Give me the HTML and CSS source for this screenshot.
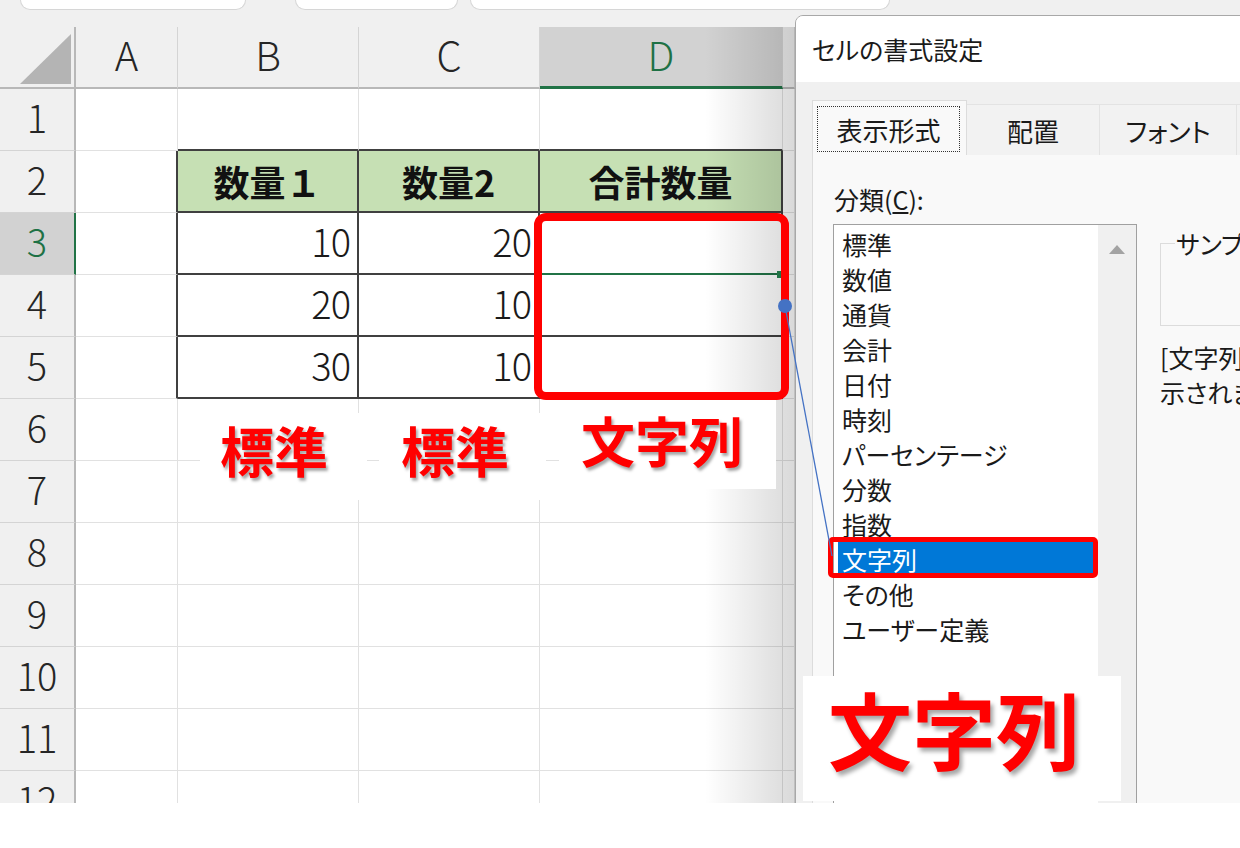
FILE: index.html
```html
<!DOCTYPE html>
<html lang="ja">
<head>
  <meta charset="UTF-8" />
  <meta name="viewport" content="width=device-width, initial-scale=1.0"/>
  <title>セルの書式設定 - 文字列</title>
  <link rel="stylesheet" href="styles.css">
</head>
<body>
  <div class="screen">

    <!-- 名前ボックス・数式バーの下端 -->
    <div class="toolbar">
      <div class="box box-name"></div>
      <div class="box box-fx"></div>
      <div class="box box-formula"></div>
    </div>

    <!-- シート -->
    <div class="sheet">
      <div class="corner"><span class="tri"></span></div>
      <div class="ch">A</div><div class="ch">B</div><div class="ch">C</div><div class="ch sel">D</div><div class="ch"></div>

      <div class="rh">1</div><div></div><div class="top"></div><div class="top"></div><div class="top"></div><div></div>
      <div class="rh">2</div><div class="edge"></div><div class="t th">数量１</div><div class="t th">数量2</div><div class="t th">合計数量</div><div></div>
      <div class="rh sel">3</div><div class="edge"></div><div class="t num">10</div><div class="t num">20</div><div class="t cur"></div><div></div>
      <div class="rh">4</div><div class="edge"></div><div class="t num">20</div><div class="t num">10</div><div class="t"></div><div></div>
      <div class="rh">5</div><div class="edge"></div><div class="t num">30</div><div class="t num">10</div><div class="t"></div><div></div>
      <div class="rh">6</div><div></div><div></div><div></div><div></div><div></div>
      <div class="rh">7</div><div></div><div></div><div></div><div></div><div></div>
      <div class="rh">8</div><div></div><div></div><div></div><div></div><div></div>
      <div class="rh">9</div><div></div><div></div><div></div><div></div><div></div>
      <div class="rh">10</div><div></div><div></div><div></div><div></div><div></div>
      <div class="rh">11</div><div></div><div></div><div></div><div></div><div></div>
      <div class="rh">12</div><div></div><div></div><div></div><div></div><div></div>
    </div>

    <!-- ダイアログの影 -->
    <div class="shade"></div>
    <div class="fill-handle"></div>

    <!-- セルの書式設定 -->
    <div class="dialog">
      <div class="dlg-title">セルの書式設定</div>
      <div class="dlg-body">
        <div class="tabs">
          <div class="tab active"><span class="focus">表示形式</span></div>
          <div class="tab w2">配置</div>
          <div class="tab w3">フォント</div>
          <div class="tab w4">罫線</div>
        </div>
        <div class="panel">
          <div class="panel-left">
            <div class="label">分類(<u>C</u>):</div>
            <div class="listbox">
              <ul>
                <li>標準</li>
                <li>数値</li>
                <li>通貨</li>
                <li>会計</li>
                <li>日付</li>
                <li>時刻</li>
                <li>パーセンテージ</li>
                <li>分数</li>
                <li>指数</li>
                <li class="selected">文字列</li>
                <li>その他</li>
                <li>ユーザー定義</li>
              </ul>
              <div class="scroll"><span class="arrow"></span></div>
            </div>
          </div>
          <div class="panel-right">
            <fieldset class="sample"><legend>サンプル</legend></fieldset>
            <p class="desc">[文字列] 表示形式のセルでは、数値も文字列として表<br>示されます。入力したとおりに表示されます。</p>
          </div>
        </div>
      </div>
    </div>

    <!-- 注釈 -->
    <div class="frame frame-d"></div>
    <div class="frame frame-item"></div>
    <svg class="connector" width="1240" height="803" viewBox="0 0 1240 803">
      <line x1="785" y1="306" x2="832" y2="556" stroke="#4472c4" stroke-width="1.3"/>
      <circle cx="785" cy="306" r="7" fill="#4472c4"/>
    </svg>
    <div class="note note-b">標準</div>
    <div class="note note-c">標準</div>
    <div class="note note-d">文字列</div>
    <div class="note note-big">文字列</div>

  </div>
</body>
</html>
```

FILE: styles.css
```css
body {
  margin: 0;
  background-color: #FFFFFF;
  font-family: "Noto Sans CJK JP", "Noto Sans", sans-serif;
  color: #222;
}
.screen {
  position: relative;
  width: 1240px;
  height: 803px;
  overflow: hidden;
  background: #FFFFFF;
}

/* 上部バー */
.toolbar {
  height: 27px;
  background: #f0f0f0;
  display: flex;
}
.toolbar .box {
  height: 10px;
  box-sizing: border-box;
  background: #FFFFFF;
  border: 1px solid #d6d6d6;
  border-top: none;
  border-radius: 0 0 10px 10px;
}
.box-name    { margin-left: 20px; width: 226px; }
.box-fx      { margin-left: 49px; width: 163px; }
.box-formula { margin-left: 12px; width: 420px; }

/* シート */
.sheet {
  display: grid;
  grid-template-columns: 76px 102px 181px 181px 243px 12px;
  grid-auto-rows: 62px;
  width: 795px;
}
.sheet > div {
  box-sizing: border-box;
  border-right: 1px solid #e1e1e1;
  border-bottom: 1px solid #e1e1e1;
  display: flex;
  align-items: center;
  justify-content: center;
}
.sheet .corner {
  background: #f0f0f0;
  border-right: 2px solid #b8b8b8;
  border-bottom: 2px solid #b8b8b8;
  justify-content: flex-end;
  align-items: flex-end;
}
.tri {
  width: 0; height: 0;
  margin: 0 3px 3px 0;
  border-left: 51px solid transparent;
  border-bottom: 50px solid #b4b4b4;
}
.sheet .ch {
  background: #f0f0f0;
  border-right-color: #d4d4d4;
  border-bottom: 2px solid #b8b8b8;
  padding-bottom: 6px;
  font-size: 40px;
  font-weight: 300;
  color: #262626;
}
.sheet .rh {
  background: #f0f0f0;
  border-right: 2px solid #b8b8b8;
  border-bottom-color: #d4d4d4;
  padding-bottom: 6px;
  font-size: 38px;
  font-weight: 300;
  color: #262626;
}
.sheet .ch.sel,
.sheet .rh.sel {
  background: #d2d2d2;
  color: #1e7145;
}
.sheet .ch.sel {
  border-bottom: 3px solid #217346;
}
.sheet .rh.sel {
  border-right-color: #217346;
}

/* 表 */
.sheet .t {
  border-right: 2px solid #404040;
  border-bottom: 2px solid #404040;
}
.sheet .edge {
  border-right: 2px solid #404040;
}
.sheet .top {
  border-bottom: 2px solid #404040;
}
.sheet .th {
  background: #c6e0b4;
  font-weight: 700;
  font-size: 36px;
  color: #111;
}
.sheet .num {
  justify-content: flex-end;
  padding: 0 7px 6px 0;
  font-size: 38px;
  font-weight: 300;
  letter-spacing: -1px;
  color: #1a1a1a;
}
.sheet .cur {
  border-bottom-color: #217346;
}
.fill-handle {
  position: absolute;
  left: 777px; top: 271px;
  width: 7px; height: 7px;
  background: #217346;
}

/* ダイアログの影 */
.shade {
  position: absolute;
  left: 705px; top: 27px;
  width: 90px; height: 776px;
  background: linear-gradient(to right, rgba(0,0,0,0), rgba(0,0,0,0.15));
  pointer-events: none;
}

/* ダイアログ */
.dialog {
  position: absolute;
  left: 795px; top: 15px;
  width: 470px; height: 800px;
  box-sizing: border-box;
  background: #f0f0f0;
  border: 1px solid #a8a8a8;
  border-radius: 8px 0 0 0;
  overflow: hidden;
  font-feature-settings: "palt";
  color: #1a1a1a;
}
.dlg-title {
  height: 66px;
  line-height: 66px;
  padding-left: 16px;
  background: #FFFFFF;
  font-size: 25px;
}
.dlg-body {
  padding: 18px 0 0 16px;
}
.tabs {
  display: flex;
  align-items: flex-end;
  height: 55px;
}
.tab {
  flex-shrink: 0;
  height: 51px;
  box-sizing: border-box;
  border-top: 1px solid #e3e3e3;
  border-right: 1px solid #e3e3e3;
  background: #f2f2f2;
  font-size: 26px;
  display: flex;
  align-items: center;
  justify-content: center;
}
.tab.active {
  width: 155px;
  height: 55px;
  padding: 5px 6px 3px 4px;
  background: #f9f9f9;
  border: 1px solid #dcdcdc;
  border-bottom: none;
}
.tab.w2 { width: 133px; }
.tab.w3 { width: 137px; }
.tab.w4 { width: 100px; }
.focus {
  flex: 1;
  align-self: stretch;
  display: flex;
  align-items: center;
  justify-content: center;
  border: 1px dotted #333;
}
.panel {
  height: 700px;
  display: flex;
  align-items: flex-start;
  padding: 27px 0 0 20px;
  background: #f9f9f9;
  border-left: 1px solid #dcdcdc;
}
.label {
  font-size: 25px;
  line-height: 34px;
  margin: 0 0 8px 1px;
}
.listbox {
  width: 304px;
  height: 600px;
  box-sizing: border-box;
  display: flex;
  background: #FFFFFF;
  border: 1px solid #a0a0a0;
}
.listbox ul {
  flex: 1;
  list-style: none;
  margin: 0;
  padding: 2px 2px 0 4px;
}
.listbox li {
  height: 35px;
  line-height: 35px;
  padding-left: 4px;
  font-size: 25px;
}
.listbox li.selected {
  background: #0078d7;
  color: #FFFFFF;
}
.scroll {
  width: 38px;
  display: flex;
  justify-content: center;
  align-items: flex-start;
  padding-top: 20px;
  background: #f0f0f0;
}
.arrow {
  width: 0; height: 0;
  border-left: 8px solid transparent;
  border-right: 8px solid transparent;
  border-bottom: 9px solid #a3a3a3;
}
.panel-right {
  margin: 44px 0 0 23px;
}
.sample {
  width: 300px;
  height: 100px;
  box-sizing: border-box;
  margin: 0;
  padding: 0 0 0 14px;
  border: 1px solid #dcdcdc;
}
.sample legend {
  padding: 0 1px;
  font-size: 25px;
  line-height: 35px;
}
.desc {
  margin: 14px 0 0;
  font-size: 25px;
  line-height: 35px;
  white-space: nowrap;
}

/* 注釈 */
.frame {
  position: absolute;
  box-sizing: border-box;
  border: 8px solid #ff0000;
  border-radius: 12px;
}
.frame-d {
  left: 534px; top: 213px;
  width: 255px; height: 187px;
}
.frame-item {
  left: 828px; top: 537px;
  width: 270px; height: 41px;
  border-width: 5px;
  border-radius: 5px;
}
.connector {
  position: absolute;
  left: 0; top: 0;
  pointer-events: none;
}
.note {
  position: absolute;
  box-sizing: border-box;
  display: flex;
  align-items: center;
  background: #FFFFFF;
  color: #ff0000;
  font-weight: 700;
  font-size: 54px;
  line-height: 1;
  text-shadow: 2px 3px 3px rgba(0,0,0,0.35);
}
.note-b {
  left: 200px; top: 413px;
  width: 167px; height: 87px;
  padding: 0 0 13px 20px;
}
.note-c {
  left: 379px; top: 413px;
  width: 167px; height: 87px;
  padding: 0 0 13px 22px;
}
.note-d {
  left: 559px; top: 400px;
  width: 217px; height: 89px;
  padding: 0 0 9px 22px;
}
.note-big {
  left: 803px; top: 676px;
  width: 318px; height: 125px;
  padding: 0 0 22px 25px;
  font-size: 84px;
  text-shadow: 3px 4px 4px rgba(0,0,0,0.35);
}
```
